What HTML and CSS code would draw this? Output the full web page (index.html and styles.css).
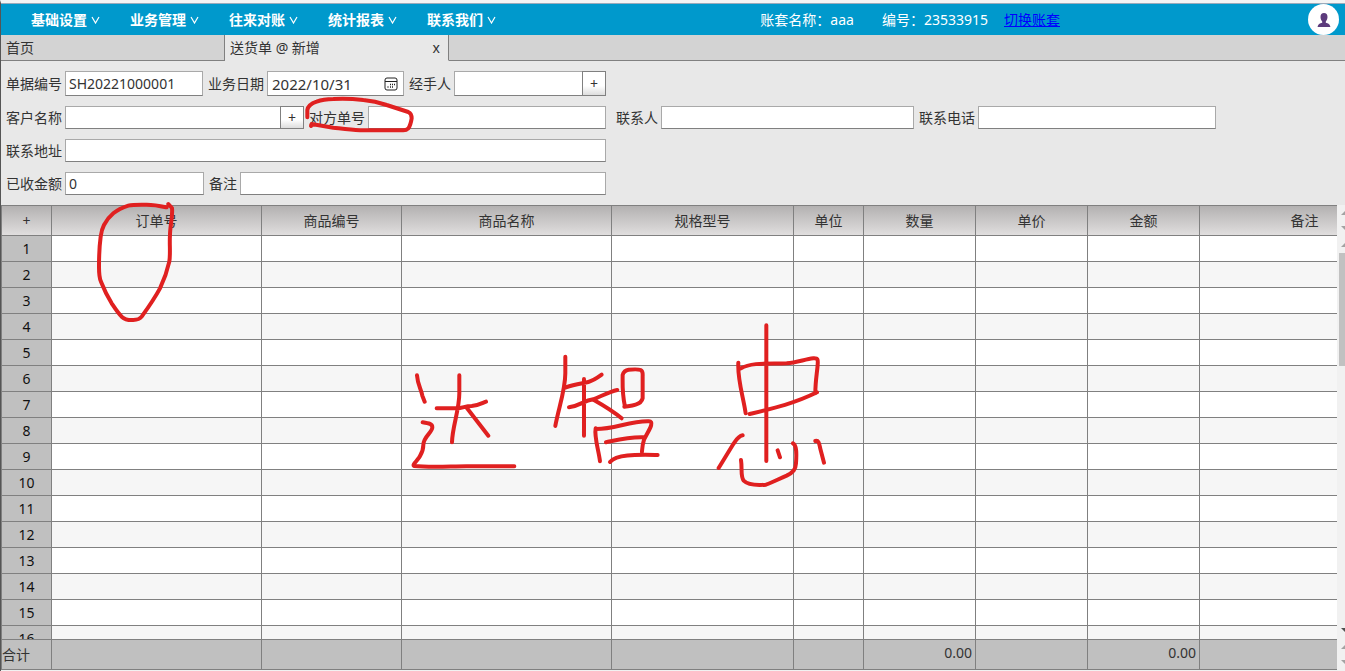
FILE: index.html
```
<!DOCTYPE html>
<html lang="zh-CN">
<head>
<meta charset="utf-8">
<title>送货单</title>
<link rel="stylesheet" href="styles.css">
</head>
<body>
<header class="topbar">
  <nav class="menu">
    <button class="menu-item" type="button">基础设置<svg class="chevron" viewBox="0 0 9 8"><path d="M1 1 4.500 7 8 1"/></svg></button>
    <button class="menu-item" type="button">业务管理<svg class="chevron" viewBox="0 0 9 8"><path d="M1 1 4.500 7 8 1"/></svg></button>
    <button class="menu-item" type="button">往来对账<svg class="chevron" viewBox="0 0 9 8"><path d="M1 1 4.500 7 8 1"/></svg></button>
    <button class="menu-item" type="button">统计报表<svg class="chevron" viewBox="0 0 9 8"><path d="M1 1 4.500 7 8 1"/></svg></button>
    <button class="menu-item" type="button">联系我们<svg class="chevron" viewBox="0 0 9 8"><path d="M1 1 4.500 7 8 1"/></svg></button>
  </nav>
  <div class="account">
    <span class="account-name">账套名称：aaa</span>
    <span class="account-no">编号：23533915</span>
    <a class="account-link" href="#">切换账套</a>
  </div>
  <button class="avatar" type="button" aria-label="用户">
    <svg viewBox="0 0 14 16"><path fill="#5c3b7c" d="M7 1C4.700 1 3.500 2.500 3.500 5c0 1.800.7 3.500 1.700 4.400v1.400C3 11.500 1 12 .6 15h12.800c-.4-3-2.400-3.500-4.600-4.200V9.400C9.800 8.500 10.500 6.800 10.500 5 10.500 2.500 9.300 1 7 1z"/></svg>
  </button>
</header>

<div class="tabs">
  <button class="tab" type="button">首页</button>
  <div class="tab active"><span>送货单 @ 新增</span><button class="tab-close" type="button">x</button></div>
  <div class="tabs-rest"></div>
</div>

<form class="form">
  <div class="row row-tall">
    <div class="field"><label for="no">单据编号</label><input id="no" class="w-no" value="SH20221000001"></div>
    <div class="field"><label for="date">业务日期</label><span class="date"><input id="date" value="2022/10/31"><button type="button" aria-label="选择日期"><svg viewBox="0 0 14 14"><rect x="1" y="1" width="12" height="12" rx="2" fill="none" stroke="#222"/><path d="M1 4.500h12" stroke="#222"/><path d="M6 7.500h1m1 0h1m1 0h1M3.500 10h1M6 10h1m1 0h1" stroke="#222" stroke-width="1.400"/></svg></button></span></div>
    <div class="field"><label for="handler">经手人</label><span class="group w-handler"><input id="handler"><button type="button" class="plus">+</button></span></div>
  </div>
  <div class="row">
    <div class="field"><label for="cust">客户名称</label><span class="group w-cust"><input id="cust"><button type="button" class="plus">+</button></span></div>
    <div class="field"><label for="refno">对方单号</label><input id="refno" class="w-m"></div>
    <div class="field field-apart"><label for="contact">联系人</label><input id="contact" class="w-contact"></div>
    <div class="field"><label for="phone">联系电话</label><input id="phone" class="w-m"></div>
  </div>
  <div class="row row-half">
    <div class="field grow"><label for="addr">联系地址</label><input id="addr"></div>
  </div>
  <div class="row row-half">
    <div class="field"><label for="paid">已收金额</label><input id="paid" class="w-paid" value="0"></div>
    <div class="field grow"><label for="memo">备注</label><input id="memo"></div>
  </div>
</form>

<main class="sheet">
  <div class="sheet-view">
    <table class="grid">
      <thead><tr><th>+</th><th>订单号</th><th>商品编号</th><th>商品名称</th><th>规格型号</th><th>单位</th><th>数量</th><th>单价</th><th>金额</th><th>备注</th></tr></thead>
      <tbody>
        <tr><th>1</th><td></td><td></td><td></td><td></td><td></td><td></td><td></td><td></td><td></td></tr>
        <tr><th>2</th><td></td><td></td><td></td><td></td><td></td><td></td><td></td><td></td><td></td></tr>
        <tr><th>3</th><td></td><td></td><td></td><td></td><td></td><td></td><td></td><td></td><td></td></tr>
        <tr><th>4</th><td></td><td></td><td></td><td></td><td></td><td></td><td></td><td></td><td></td></tr>
        <tr><th>5</th><td></td><td></td><td></td><td></td><td></td><td></td><td></td><td></td><td></td></tr>
        <tr><th>6</th><td></td><td></td><td></td><td></td><td></td><td></td><td></td><td></td><td></td></tr>
        <tr><th>7</th><td></td><td></td><td></td><td></td><td></td><td></td><td></td><td></td><td></td></tr>
        <tr><th>8</th><td></td><td></td><td></td><td></td><td></td><td></td><td></td><td></td><td></td></tr>
        <tr><th>9</th><td></td><td></td><td></td><td></td><td></td><td></td><td></td><td></td><td></td></tr>
        <tr><th>10</th><td></td><td></td><td></td><td></td><td></td><td></td><td></td><td></td><td></td></tr>
        <tr><th>11</th><td></td><td></td><td></td><td></td><td></td><td></td><td></td><td></td><td></td></tr>
        <tr><th>12</th><td></td><td></td><td></td><td></td><td></td><td></td><td></td><td></td><td></td></tr>
        <tr><th>13</th><td></td><td></td><td></td><td></td><td></td><td></td><td></td><td></td><td></td></tr>
        <tr><th>14</th><td></td><td></td><td></td><td></td><td></td><td></td><td></td><td></td><td></td></tr>
        <tr><th>15</th><td></td><td></td><td></td><td></td><td></td><td></td><td></td><td></td><td></td></tr>
        <tr><th>16</th><td></td><td></td><td></td><td></td><td></td><td></td><td></td><td></td><td></td></tr>
      </tbody>
      <tfoot><tr><th>合计</th><td></td><td></td><td></td><td></td><td></td><td>0.00</td><td></td><td>0.00</td><td></td></tr></tfoot>
    </table>
  </div>
  <div class="bars">
    <div class="bar bar-end"><svg class="arrow" viewBox="0 0 8 4"><path d="M0 4 4 0 8 4z"/></svg><svg class="arrow" viewBox="0 0 8 4"><path d="M0 0 4 4 8 0z"/></svg></div>
    <div class="bar bar-main"><svg class="arrow" viewBox="0 0 8 4"><path d="M0 4 4 0 8 4z"/></svg><div class="thumb"></div><svg class="arrow arrow-on" viewBox="0 0 8 4"><path d="M0 0 4 4 8 0z"/></svg></div>
    <div class="bar bar-end"><svg class="arrow" viewBox="0 0 8 4"><path d="M0 4 4 0 8 4z"/></svg><svg class="arrow" viewBox="0 0 8 4"><path d="M0 0 4 4 8 0z"/></svg></div>
  </div>
</main>

<svg class="ink" viewBox="0 0 1345 671" aria-hidden="true">
  <g transform="translate(280 60) scale(.3333)">
    <path d="M82 172V150C84 136 95 130 110 125 125 119 140 117 160 117 190 115 225 117 250 120 275 122 300 128 320 135L385 156C394 160 395 166 395 175 393 188 390 198 385 205 380 210 375 211 370 211H240C210 210 185 206 160 203L95 192 93 198"/>
  </g>
  <g transform="translate(0 200) scale(.3333)">
    <path d="M505 12 516 24C519 45 510 80 510 105 508 130 512 160 508 185 502 212 492 240 480 265 465 293 445 322 425 350 419 358 410 360 400 360 387 361 374 358 365 350 353 338 345 325 335 310 323 290 312 268 303 245 297 232 297 220 297 200 297 160 298 140 302 110 304 95 305 88 312 75 320 60 328 50 340 40 355 28 370 22 385 17 400 13 420 14 440 14 465 14 482 18 500 22"/>
  </g>
  <g transform="translate(400 310) scale(.3333)">
    <path d="M51 196C53 225 64 238 67 257L74 275M178 196V250C178 300 157 350 156 397M110 295H165C190 296 192 288 215 288 235 287 245 280 258 275M199 292 265 377M68 337C88 340 97 342 97 352 97 368 70 380 70 405 70 425 63 433 57 443 48 456 37 464 42 468 90 473 150 469 200 469H343"/>
    <path d="M496 140V190C496 240 477 290 466 348M498 232C525 222 550 220 565 216 580 212 590 205 605 194M552 207V377M507 292C540 288 550 272 580 268 605 258 628 245 652 240M580 269C610 286 635 300 665 325M675 290C666 250 668 220 668 195 671 184 678 180 686 179 700 178 715 177 722 180 730 184 728 190 728 200V265C725 278 717 281 707 284 695 288 685 288 673 290M587 355C582 380 597 425 600 454M587 357C640 358 690 333 745 334 770 332 737 375 732 390 727 405 727 415 726 425M618 397C660 388 690 380 732 382M630 456C650 432 710 434 773 435"/>
  </g>
  <g transform="translate(680 310) scale(.3333)">
    <path d="M259 46V453M175 158C172 210 190 260 197 310M183 175C215 156 270 162 320 160 350 158 375 148 400 145 415 144 414 150 413 165 411 190 406 215 406 250M209 312C280 295 345 280 411 247M188 376C175 378 167 392 160 402L116 474M183 450C187 475 181 500 191 512 205 526 235 526 258 524 280 517 300 505 320 497 340 487 347 478 348 460 350 430 350 405 339 400M293 421 300 442M406 393C418 390 418 405 421 416L432 458"/>
  </g>
</svg>
</body>
</html>
```
FILE: styles.css
```
* { box-sizing: border-box; }

body {
  margin: 0;
  height: 100vh;
  display: flex;
  flex-direction: column;
  overflow: hidden;
  position: relative;
  background: #e8e8e8;
  border-left: 1px solid #555;
  border-top: 3px solid #f4f4f4;
  color: #333;
  font: 14px/20px "Noto Sans", "Noto Sans CJK SC", sans-serif;
}

button, input { font: inherit; color: inherit; margin: 0; }
button { border: 0; background: none; padding: 0; }

/* Top bar */
.topbar {
  flex: none;
  display: flex;
  align-items: center;
  height: 32px;
  border-top: 1px solid #9ab;
  background: #09c;
  color: #fff;
  padding: 0 6px 0 30px;
}
.menu { display: flex; gap: 29px; }
.menu-item {
  display: flex;
  align-items: center;
  gap: 4px;
  width: 70px;
  font-weight: 700;
  white-space: nowrap;
}
.chevron { width: 9px; height: 8px; flex: none; fill: none; stroke: #fff; stroke-width: 1.2; }
.account { display: flex; margin-left: auto; margin-right: 248px; white-space: nowrap; }
.account-no { margin-left: 28px; }
.account-link { margin-left: 16px; color: #00f; }
.avatar {
  width: 31px;
  height: 31px;
  border-radius: 50%;
  background: #fff;
  display: grid;
  place-items: center;
}
.avatar svg { width: 14px; height: 16px; }

/* Tabs */
.tabs { flex: none; display: flex; height: 26px; background: #d3d3d3; }
.tab, .tabs-rest { border-bottom: 1px solid #808080; }
.tab {
  width: 224px;
  display: flex;
  justify-content: space-between;
  align-items: center;
  padding: 0 8px 0 5px;
  border-right: 1px solid #808080;
}
.tab.active { background: #e8e8e8; border-bottom-color: #e8e8e8; }
.tab-close { line-height: 16px; }
.tabs-rest { flex: 1; }

/* Form */
.form {
  flex: none;
  display: flex;
  flex-direction: column;
  gap: 10px;
  padding: 10px 5px;
}
.row { display: flex; gap: 5px; height: 23px; }
.row-tall { height: 25px; }
.row-half { width: 600px; }
.field { display: flex; align-items: center; gap: 3px; height: 100%; }
.field label { white-space: nowrap; }
.field-apart { margin-left: 5px; }
.grow { flex: 1; }
.grow input { flex: 1; }
.field input {
  height: 100%;
  min-width: 0;
  padding: 0 3px;
  border: 1px solid #a9a9a9;
  border-bottom-color: #808080;
  border-radius: 0;
  background: #fff;
  outline: 0;
}
.w-no { width: 138px; }
.w-paid { width: 139px; }
.w-m { width: 238px; }
.w-contact { width: 253px; }
.w-handler { width: 152px; }
.w-cust { width: 239px; }
.group { display: flex; height: 100%; }
.group input { flex: 1; border-right: 0; }
.plus {
  width: 24px;
  border: 1px solid #808080;
  background: linear-gradient(#fff 60%, #ddd);
  line-height: 16px;
}
.date {
  display: flex;
  align-items: center;
  width: 137px;
  height: 100%;
  padding-right: 5px;
  border: 1px solid #a9a9a9;
  border-bottom-color: #808080;
  background: #fff;
}
.date input { flex: 1; border: 0; padding: 0 4px; font-size: 15px; }
.date svg { display: block; width: 14px; height: 14px; }

/* Table: the head and the totals stay put, the rows between them are clipped */
.sheet { flex: 1; min-height: 0; display: flex; border-bottom: 1px solid #f1f1f1; }
.sheet-view { flex: 1; min-width: 0; overflow: hidden; }
.grid {
  display: flex;
  flex-direction: column;
  width: max-content;
  height: 100%;
  border-left: 1px solid #808080;
}
.grid thead, .grid tfoot { display: block; flex: none; }
.grid tbody { display: block; flex: 1; min-height: 0; overflow: hidden; }
.grid tr {
  display: grid;
  grid-template-columns: 50px 210px 140px 210px 182px 70px 112px 112px 112px 210px;
  height: 26px;
}
.grid th, .grid td {
  display: grid;
  place-items: center;
  padding: 0;
  font-weight: 400;
  border-right: 1px solid #808080;
  border-bottom: 1px solid #808080;
}
.grid thead tr, .grid tfoot tr { height: 31px; border-top: 1px solid #808080; }
.grid thead th { background: linear-gradient(#b3b1b1, #e0dede); }
.grid tbody th { background: #c0c0c0; color: #111; }
.grid tbody td { background: #fff; }
.grid tbody tr:nth-child(even) td { background: #f6f6f6; }
.grid tfoot th, .grid tfoot td { background: #c0c0c0; }
.grid tfoot td { justify-items: end; padding: 0 3px 4px 0; }
.grid tfoot th { justify-items: start; }

/* Scroll bars */
.bars { flex: none; width: 8px; display: flex; flex-direction: column; overflow: hidden; background: #f1f1f1; }
.bar { display: flex; flex-direction: column; }
.bar-end { height: 31px; justify-content: space-between; padding: 6px 0; }
.bar-main { flex: 1; padding: 7px 0; }
.thumb { height: 113px; width: 6px; margin: 6px 0 auto 2px; background: #c1c1c1; }
.arrow { width: 8px; height: 4px; margin-left: 4px; flex: none; fill: #a3a3a3; }
.arrow-on { fill: #505050; }

/* Pen marks over the page */
.ink {
  position: absolute;
  left: -1px;
  top: -3px;
  width: 1345px;
  height: 671px;
  pointer-events: none;
  fill: none;
  stroke: #e02020;
  stroke-width: 12;
  stroke-linecap: round;
  stroke-linejoin: round;
}
```
